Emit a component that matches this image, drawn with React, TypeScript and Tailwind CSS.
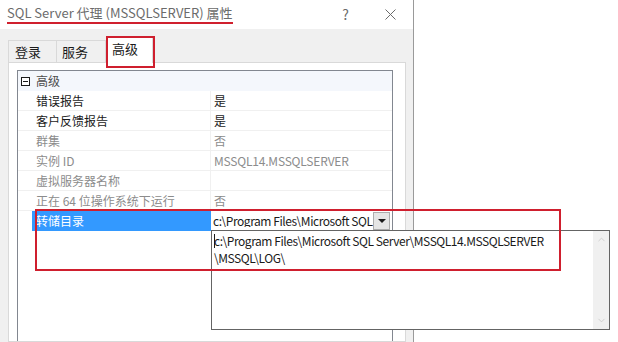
import { ChevronDown, ChevronUp } from 'lucide-react';

const font = { fontFamily: '"Noto Sans CJK SC", "Noto Sans", sans-serif' };

type Row = { name: string; value: string; disabled?: boolean };

const rows: Row[] = [
  { name: '错误报告', value: '是' },
  { name: '客户反馈报告', value: '是' },
  { name: '群集', value: '否', disabled: true },
  { name: '实例 ID', value: 'MSSQL14.MSSQLSERVER', disabled: true },
  { name: '虚拟服务器名称', value: '', disabled: true },
  { name: '正在 64 位操作系统下运行', value: '否', disabled: true },
];

function PropRow({ row }: { row: Row }) {
  const color = row.disabled ? 'text-[#8c8c8c]' : 'text-[#1a1a1a]';
  return (
    <div className={`flex h-[20px] items-center border-b border-[#f0f0f0] text-[12px] leading-none ${color}`}>
      <div className="w-[14px] shrink-0 bg-white" />
      <div className="flex h-full w-[179px] shrink-0 items-center border-r border-[#f0f0f0] pl-[4px]">{row.name}</div>
      <div className="flex h-full flex-1 items-center pl-[3px] tracking-[-0.2px]">{row.value}</div>
    </div>
  );
}

export default function App() {
  return (
    <div className="relative flex h-[342px] w-[618px] overflow-hidden bg-white" style={font}>
      {/* dialog */}
      <div className="flex h-full w-[414px] shrink-0 flex-col border-r border-[#9a9a9a]">
        <div className="flex h-[29px] shrink-0 items-center bg-white pl-[7px] pr-[17px]">
          <span className="border-b-2 border-[#d0202e] pb-[1px] text-[13px] leading-[16px] text-[#6b6b6b]">
            SQL Server 代理 (MSSQLSERVER) 属性
          </span>
          <span className="ml-auto mr-[36px] text-[14px] text-[#6b6b6b]">?</span>
          <svg width="11" height="11" viewBox="0 0 11 11" className="text-[#6b6b6b]">
            <path d="M0.5 0.5 L10.5 10.5 M10.5 0.5 L0.5 10.5" stroke="currentColor" strokeWidth="1" fill="none" />
          </svg>
        </div>

        <div className="flex flex-1 flex-col bg-[#f0f0f0] pl-[8px] pr-[7px]">
          {/* tabs */}
          <div className="flex h-[33px] shrink-0 items-end pt-[8px]">
            <div className="flex h-[22px] w-[49px] items-center border border-b-0 border-[#d9d9d9] bg-[#f0f0f0] pl-[6px] text-[13px] text-[#1a1a1a]">
              登录
            </div>
            <div className="flex h-[22px] w-[49px] items-center border border-b-0 border-l-0 border-[#d9d9d9] bg-[#f0f0f0] pl-[5px] text-[13px] text-[#1a1a1a]">
              服务
            </div>
            <div className="relative -mb-px flex h-[26px] w-[47px] items-start border border-b-0 border-[#d9d9d9] bg-white pl-[5px] pt-[1px] text-[13px] text-[#1a1a1a]">
              高级
              <div className="absolute -left-[1px] -top-[2px] h-[32px] w-[49px] border-2 border-[#cf1f2e]" />
            </div>
          </div>

          {/* tab panel */}
          <div className="flex flex-1 flex-col border border-[#d9d9d9] bg-white pl-[8px] pr-[12px] pt-[7px]">
            <div className="flex flex-1 flex-col border border-b-0 border-[#828790] bg-white">
              <div className="flex h-[20px] items-center bg-[#f4f7fc] text-[12px] text-[#4d4d4d]">
                <div className="flex w-[14px] shrink-0 items-center justify-center">
                  <div className="flex h-[9px] w-[9px] items-center justify-center border border-[#1a1a1a] bg-white">
                    <div className="h-px w-[5px] bg-[#1a1a1a]" />
                  </div>
                </div>
                <div className="pl-[4px]">高级</div>
              </div>
              {rows.map((r) => (
                <PropRow key={r.name} row={r} />
              ))}
              <div className="flex h-[20px] items-center text-[12px] leading-none">
                <div className="w-[14px] shrink-0 bg-white" />
                <div className="flex h-full w-[179px] shrink-0 items-center bg-[#3399ff] pl-[4px] text-white">转储目录</div>
                <div className="flex h-full flex-1 items-center overflow-hidden pl-[2px] text-[12px] tracking-[-0.45px] text-[#1a1a1a]">
                  <span className="flex-1 overflow-hidden whitespace-nowrap">c:\Program Files\Microsoft SQL Server\MSSQL14.MSSQLSERVER</span>
                  <div className="mr-[2px] flex h-[18px] w-[17px] shrink-0 items-center justify-center border border-[#acacac] bg-[#e5e5e5]">
                    <div className="h-0 w-0 border-x-[4px] border-t-[4px] border-x-transparent border-t-[#1a1a1a]" />
                  </div>
                </div>
              </div>
              <div className="flex-1" />
            </div>
          </div>
        </div>
      </div>

      {/* dropdown editor */}
      <div className="absolute left-[211px] top-[230px] flex h-[100px] w-[399px] border border-[#646464] bg-white">
        <div className="relative flex-1 pl-[2px] pt-[1px] text-[12px] leading-[17px] tracking-[-0.45px] text-[#1a1a1a]">
          <div className="absolute left-[2px] top-[3px] h-[14px] w-px bg-[#1a1a1a]" />
          <div className="whitespace-nowrap">c:\Program Files\Microsoft SQL Server\MSSQL14.MSSQLSERVER</div>
          <div>\MSSQL\LOG\</div>
        </div>
        <div className="flex w-[16px] flex-col items-center justify-between bg-[#f0f0f0] py-[3px]">
          <ChevronUp size={11} strokeWidth={1.5} className="text-[#c2c2c2]" />
          <ChevronDown size={11} strokeWidth={1.5} className="text-[#c2c2c2]" />
        </div>
      </div>

      {/* annotation */}
      <div className="absolute left-[35px] top-[209px] h-[62px] w-[526px] border-2 border-[#cf1f2e]" />
    </div>
  );
}
